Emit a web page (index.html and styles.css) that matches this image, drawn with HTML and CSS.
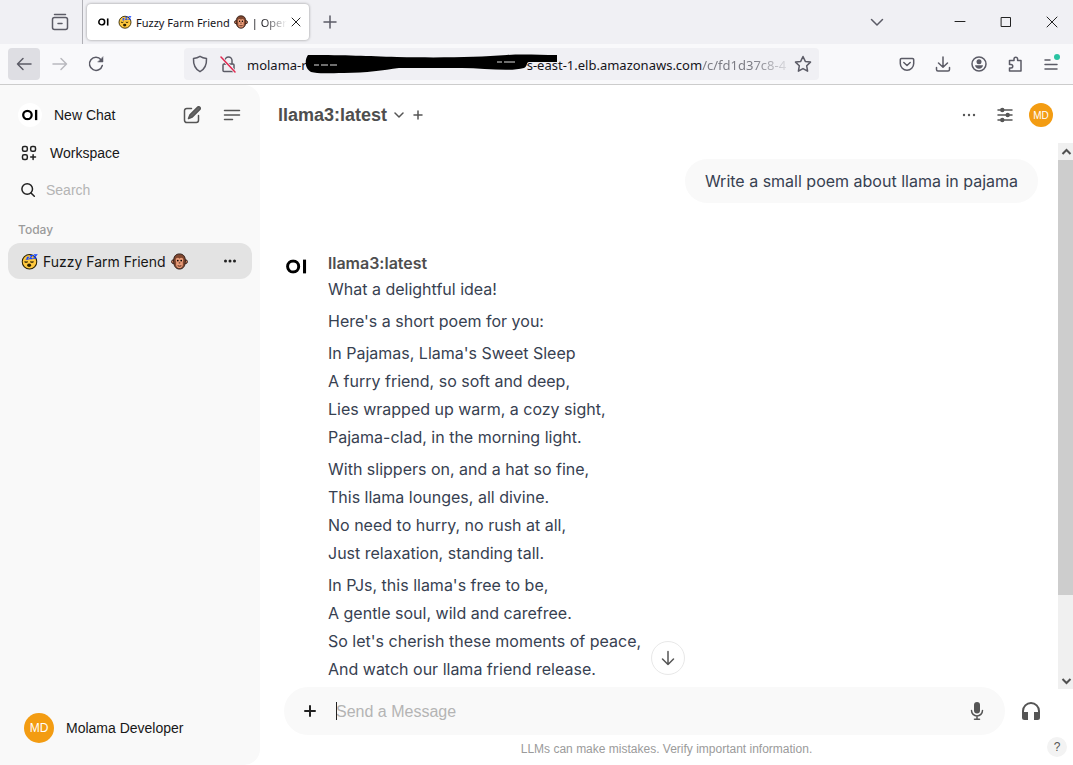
FILE: index.html
```html
<!DOCTYPE html>
<html lang="en">
<head>
<meta charset="utf-8">
<title>Fuzzy Farm Friend | Open WebUI</title>
<link rel="stylesheet" href="styles.css">
</head>
<body>
<svg class="defs" aria-hidden="true">
  <symbol id="logo" viewBox="0 0 20 14"><circle cx="6.8" cy="7" r="5.3" fill="none" stroke="#000" stroke-width="2.8"/><path d="M16.2 .4h2.9v13.2h-2.9z"/></symbol>
  <symbol id="sleepy" viewBox="0 0 18 18">
    <circle cx="9" cy="9.3" r="7.7" fill="#ffc83d" stroke="#2b2100" stroke-width="1.1"/>
    <path d="M3.8 9q1.600 1.500 3.200 0M10 9q1.600 1.500 3.200 0" fill="none" stroke="#2b2100" stroke-width="1.2"/>
    <ellipse cx="8.600" cy="13" rx="2.1" ry="1.8" fill="#2b2100"/>
    <path d="M13.500 2h3l-3 3.500h3.200M9.300 2.800h2.700L9.300 5.900h2.900M6 4.500h1.800L6 6.500h2" fill="none" stroke="#1746ff" stroke-width="1.200"/>
  </symbol>
  <symbol id="monkey" viewBox="0 0 18 18">
    <circle cx="2.6" cy="9.2" r="2" fill="#d98a68" stroke="#2a1711"/><circle cx="15.4" cy="9.2" r="2" fill="#d98a68" stroke="#2a1711"/>
    <path d="M9 1C4.600 1 2.800 4 2.800 8.500S4.500 17 9 17s6.200-4 6.200-8.500S13.400 1 9 1z" fill="#80472f" stroke="#2a1711"/>
    <path d="M9 6C7.800 4.300 4.900 5 5 7.600c0 1.300.8 1.800.5 3.200C5 13.800 6.500 16 9 16s4-2.200 3.500-5.200c-.3-1.400.5-1.900.5-3.200.1-2.600-2.800-3.300-4-1.600z" fill="#ea9c78"/>
    <circle cx="7.200" cy="8" r=".9"/><circle cx="10.800" cy="8" r=".9"/><path d="M8.200 10.500h1.600M7 13.500q2 .9 4 0" fill="none" stroke="#3a1b12"/>
  </symbol>
</svg>

<header class="browser">
  <div class="tabs">
    <div class="view-slot">
      <button class="icon-btn" aria-label="Recent browsing"><svg width="18" height="18" viewBox="0 0 18 18" class="line chrome-ink"><path d="M3.500 1.500h11" /><rect x="1.500" y="4.500" width="15" height="12" rx="2"/><path d="M7 10.500h4"/></svg></button>
    </div>
    <div class="tab">
      <svg class="tab-logo" viewBox="0 0 20 14"><use href="#logo"/></svg>
      <svg class="tab-emoji"><use href="#sleepy"/></svg>
      <span>Fuzzy Farm Friend</span>
      <svg class="tab-emoji"><use href="#monkey"/></svg>
      <span class="tab-tail">| Oper</span>
      <button class="icon-btn tab-close" aria-label="Close tab"><svg width="10" height="10" viewBox="0 0 10 10" class="line thin dark"><path d="M1 1l8 8M9 1L1 9"/></svg></button>
    </div>
    <button class="icon-btn new-tab" aria-label="New tab"><svg width="14" height="14" viewBox="0 0 14 14" class="line chrome-ink"><path d="M7 1v12M1 7h12"/></svg></button>
    <div class="window-controls">
      <button class="icon-btn wide" aria-label="List all tabs"><svg width="14" height="14" viewBox="0 0 14 14" class="line chrome-ink"><path d="M1.500 4.500L7 10l5.500-5.500"/></svg></button>
      <button class="icon-btn" aria-label="Minimize"><svg width="12" height="12" viewBox="0 0 12 12" class="line thin dark"><path d="M1 5.500h10"/></svg></button>
      <button class="icon-btn" aria-label="Maximize"><svg width="12" height="12" viewBox="0 0 12 12" class="line thin dark"><path d="M1.500 1.500h9v9h-9z" stroke-linejoin="miter"/></svg></button>
      <button class="icon-btn" aria-label="Close window"><svg width="12" height="12" viewBox="0 0 12 12" class="line thin dark"><path d="M1 1l10 10M11 1L1 11"/></svg></button>
    </div>
  </div>
  <div class="toolbar">
    <button class="icon-btn nav active" aria-label="Back"><svg width="16" height="16" viewBox="0 0 16 16" class="line chrome-ink"><path d="M15 8H1.500M7 2.500L1.500 8 7 13.500"/></svg></button>
    <button class="icon-btn nav faded" aria-label="Forward"><svg width="16" height="16" viewBox="0 0 16 16" class="line chrome-ink"><path d="M1 8h13.500M9 2.500l5.500 5.500L9 13.500"/></svg></button>
    <button class="icon-btn nav" aria-label="Reload"><svg width="16" height="16" viewBox="0 0 16 16" class="line chrome-ink"><path d="M14.300 9.500A6.500 6.500 0 1 1 13 3.700"/><path d="M15 1v5h-5z" fill="#5b5b66" stroke-width=".5"/></svg></button>
    <div class="urlbar">
      <svg width="18" height="18" viewBox="0 0 18 18" class="line chrome-ink"><path d="M9 1.300c2 1.300 4 1.900 6.500 2.200.3 6-1.500 10.500-6.500 13.200C4 14 2.200 9.500 2.500 3.500 5 3.200 7 2.600 9 1.300z"/></svg>
      <svg width="18" height="18" viewBox="0 0 18 18" class="line chrome-ink"><rect x="4" y="9" width="11" height="7.500" rx="1"/><path d="M6 9V5.500a3.500 3.500 0 0 1 7 0V9"/><path d="M2 2l14 15" stroke="#f0f0f4" stroke-width="3"/><path d="M2 2l14 15" stroke="#e22850"/></svg>
      <div class="url">
        <span>molama-r</span>
        <svg class="scribble" viewBox="0 0 220 20" aria-hidden="true"><path d="M1 0C40 0 60 1 90 2c50 1 80 0 110-2 15-1 33 0 50 0v7h-28c-3 0-1 4-5 6-15 4-40 0-62 0H92c-16 2-32 5-55 5-14 0-26 1-33-1-7-4-6-13-3-17z"/><path d="M7 10h5m2 0h7m2 0h7M190 7h5m2 0h11" stroke="#ddd" fill="none"/></svg>
        <span>s-east-1.elb.amazonaws.com</span><span class="path">/c/fd1d37c8-4</span>
      </div>
      <svg width="18" height="18" viewBox="0 0 18 18" class="line chrome-ink"><path d="M9 1.500l2.300 4.900 5.200.7-3.800 3.700.9 5.400L9 13.600l-4.600 2.600.9-5.400L1.500 7.100l5.200-.7z"/></svg>
    </div>
    <div class="tools">
      <button class="icon-btn" aria-label="Save to Pocket"><svg width="16" height="16" viewBox="0 0 16 16" class="line chrome-ink"><path d="M2.500 2.500h11a1.200 1.200 0 0 1 1.200 1.200V7.500a6.700 6.700 0 0 1-13.400 0V3.700a1.200 1.200 0 0 1 1.200-1.200z"/><path d="M4.800 6.500L8 9.500l3.200-3"/></svg></button>
      <button class="icon-btn" aria-label="Downloads"><svg width="16" height="16" viewBox="0 0 16 16" class="line chrome-ink"><path d="M8 1v10M3.500 7L8 11.300 12.500 7M1.500 11.500v2a1.500 1.500 0 0 0 1.500 1.500h10a1.500 1.500 0 0 0 1.500-1.500v-2"/></svg></button>
      <button class="icon-btn" aria-label="Account"><svg width="16" height="16" viewBox="0 0 16 16" class="line chrome-ink"><circle cx="8" cy="8" r="7"/><circle cx="8" cy="5.800" r="2.500" fill="#5b5b66" stroke="none"/><path d="M4 9.300h8c-.3 2.200-2 3.400-4 3.400s-3.700-1.200-4-3.400z" fill="#5b5b66" stroke="none"/></svg></button>
      <button class="icon-btn" aria-label="Extensions"><svg width="16" height="16" viewBox="0 0 16 16" class="line chrome-ink"><path d="M2.500 7V4.500H7V3a1.800 1.800 0 0 1 3.600 0v1.500h3.400v10.500H2.500v-3H4a1.700 1.700 0 0 0 0-3.500H2.500z"/></svg></button>
      <button class="icon-btn" aria-label="Menu, update available"><svg width="16" height="16" viewBox="0 0 16 16" class="line chrome-ink"><path d="M2 4h5M2 8.500h12M2 13h12"/></svg><i class="dot"></i></button>
    </div>
  </div>
</header>

<div class="app">
  <aside class="sidebar">
    <div class="side-head">
      <a class="new-chat" href="#"><span class="logo-disc"><svg width="16" height="12" viewBox="0 0 20 14"><use href="#logo"/></svg></span>New Chat</a>
      <button class="icon-btn" aria-label="New chat"><svg width="18" height="18" viewBox="0 0 18 18" class="line grey"><path d="M8.500 2.500H3.700A2.200 2.200 0 0 0 1.500 4.700v9.600a2.200 2.200 0 0 0 2.200 2.200h9.600a2.200 2.200 0 0 0 2.200-2.200V9.500"/><path d="M14.500 1.200a1.600 1.600 0 0 1 2.300 2.300L9.300 11l-3.800 1.500L7 8.700z" fill="#666"/></svg></button>
      <button class="icon-btn" aria-label="Toggle sidebar"><svg width="18" height="18" viewBox="0 0 18 18" class="line grey"><path d="M1.500 4.500h15M1.500 9h15M1.500 13.500h8"/></svg></button>
    </div>
    <a class="workspace" href="#"><svg width="16" height="16" viewBox="0 0 16 16" class="line dark"><rect x="1.500" y="1.500" width="4.800" height="4.800" rx="1.500"/><rect x="9.700" y="1.500" width="4.800" height="4.800" rx="1.500"/><rect x="1.500" y="9.700" width="4.800" height="4.800" rx="1.500"/><path d="M12.100 9.700v4.800M9.700 12.100h4.800"/></svg>Workspace</a>
    <label class="search"><svg width="16" height="16" viewBox="0 0 16 16" class="line dark"><circle cx="7.200" cy="7" r="5.300"/><path d="M11 11l3.300 3.300"/></svg><input type="text" placeholder="Search" aria-label="Search"></label>
    <div class="day">Today</div>
    <div class="chat-item">
      <a href="#"><svg class="emoji"><use href="#sleepy"/></svg>Fuzzy Farm Friend<svg class="emoji"><use href="#monkey"/></svg></a>
      <button class="icon-btn" aria-label="Chat menu"><svg width="14" height="4" viewBox="0 0 14 4" fill="#222"><circle cx="2.500" cy="2" r="1.500"/><circle cx="7" cy="2" r="1.500"/><circle cx="11.500" cy="2" r="1.500"/></svg></button>
    </div>
    <button class="user"><span class="avatar large">MD</span>Molama Developer</button>
  </aside>

  <main>
    <div class="top">
      <button class="model">llama3:latest <svg width="10" height="10" viewBox="0 0 10 10" class="line grey"><path d="M1 3l4 4 4-4"/></svg></button>
      <button class="icon-btn" aria-label="Add model"><svg width="10" height="10" viewBox="0 0 10 10" class="line grey"><path d="M5 1v8M1 5h8"/></svg></button>
      <div class="top-actions">
        <button class="icon-btn" aria-label="More"><svg width="14" height="4" viewBox="0 0 14 4" fill="#555"><circle cx="2" cy="2" r="1.200"/><circle cx="7" cy="2" r="1.200"/><circle cx="12" cy="2" r="1.200"/></svg></button>
        <button class="icon-btn" aria-label="Controls"><svg width="16" height="16" viewBox="0 0 16 16" class="line grey"><path d="M1 3h14M1 8h14M1 13h14"/><g fill="#555" stroke="none"><circle cx="5.300" cy="3" r="2.200"/><circle cx="10.700" cy="8" r="2.200"/><circle cx="5.300" cy="13" r="2.200"/></g></svg></button>
        <button class="avatar" aria-label="User menu">MD</button>
      </div>
    </div>

    <div class="messages">
      <div class="thread">
        <div class="bubble">Write a small poem about llama in pajama</div>
        <article class="reply">
          <svg class="reply-logo" viewBox="0 0 20 14"><use href="#logo"/></svg>
          <div>
            <h2>llama3:latest</h2>
            <p>What a delightful idea!</p>
            <p>Here's a short poem for you:</p>
            <p>In Pajamas, Llama's Sweet Sleep<br>A furry friend, so soft and deep,<br>Lies wrapped up warm, a cozy sight,<br>Pajama-clad, in the morning light.</p>
            <p>With slippers on, and a hat so fine,<br>This llama lounges, all divine.<br>No need to hurry, no rush at all,<br>Just relaxation, standing tall.</p>
            <p>In PJs, this llama's free to be,<br>A gentle soul, wild and carefree.<br>So let's cherish these moments of peace,<br>And watch our llama friend release.</p>
          </div>
        </article>
      </div>
      <div class="scrollbar" aria-hidden="true">
        <svg viewBox="0 0 15 17"><path d="M4.500 11L8.500 7l4 4"/></svg>
        <div class="track"><div class="thumb"></div></div>
        <svg viewBox="0 0 15 17"><path d="M4.500 7l4 4 4-4"/></svg>
      </div>
    </div>

    <footer>
      <button class="to-bottom" aria-label="Scroll to bottom"><svg width="16" height="16" viewBox="0 0 16 16" class="line grey"><path d="M8 1.500v13M2.500 9L8 14.500 13.500 9"/></svg></button>
      <form class="compose">
        <div class="field">
          <button type="button" class="icon-btn" aria-label="Attach"><svg width="14" height="14" viewBox="0 0 14 14" class="line dark heavy"><path d="M7 2v10M2 7h10"/></svg></button>
          <span class="entry"><i class="caret"></i><input type="text" placeholder="Send a Message" aria-label="Send a Message"></span>
          <button type="button" class="icon-btn" aria-label="Record voice"><svg width="20" height="20" viewBox="0 0 20 20" class="line grey"><rect x="7" y="1" width="6" height="11.500" rx="3" fill="#555" stroke="none"/><path d="M4.500 9.500a5.500 5.500 0 0 0 11 0M10 15v3M7.500 18.300h5"/></svg></button>
        </div>
        <button type="button" class="icon-btn" aria-label="Call"><svg width="20" height="20" viewBox="0 0 20 20" fill="#555"><path d="M10 1a9 9 0 0 0-9 9v6.500A2.500 2.500 0 0 0 3.500 19H7v-8H3v-1a7 7 0 0 1 14 0v1h-4v8h3.500a2.500 2.500 0 0 0 2.500-2.500V10a9 9 0 0 0-9-9z"/></svg></button>
      </form>
      <p class="note">LLMs can make mistakes. Verify important information.</p>
      <button class="help" aria-label="Help">?</button>
    </footer>
  </main>
</div>
</body>
</html>
```

FILE: styles.css
```css
* { box-sizing: border-box; }
body {
  margin: 0;
  height: 100vh;
  display: flex;
  flex-direction: column;
  overflow: hidden;
  background: #fff;
  font-family: "Liberation Sans", Arial, sans-serif;
  font-size: 14px;
  color: #171717;
}
button, input { font: inherit; color: inherit; border: 0; background: none; padding: 0; margin: 0; }
input { outline: 0; min-width: 0; }
a { color: inherit; text-decoration: none; }
svg { flex: none; display: block; }
.defs { position: absolute; width: 0; height: 0; }
.line { fill: none; stroke-width: 1.5; stroke-linecap: round; stroke-linejoin: round; }
.line.thin { stroke-width: 1; }
.line.heavy { stroke-width: 2; }
.chrome-ink { stroke: #5b5b66; }
.dark { stroke: #222; }
.grey { stroke: #555; }
.icon-btn { flex: none; display: flex; align-items: center; justify-content: center; position: relative; }

.browser { flex: none; font-family: "Noto Sans", sans-serif; border-bottom: 1px solid #ccc; }
.tabs { height: 44px; display: flex; align-items: center; background: #f0f0f4; }
.view-slot { flex: none; width: 83px; height: 44px; display: flex; align-items: center; justify-content: flex-end; padding-right: 13px; border-right: 1px solid #b0b0b6; }
.tab {
  flex: none; width: 222px; height: 36px; margin-left: 4px; padding: 0 12px 0 11px;
  display: flex; align-items: center; gap: 4px;
  background: #fff; border-radius: 4px; box-shadow: 0 0 3px #00000066;
  font-size: 11px; color: #15141a; white-space: nowrap;
}
.tab-logo { width: 11px; height: 8px; margin-right: 5px; }
.tab-emoji { width: 14px; height: 14px; }
.tab-tail { mask-image: linear-gradient(to right, #000 30%, transparent); }
.tab-close { margin-left: auto; }
.new-tab { width: 28px; margin-left: 7px; }
.window-controls { margin-left: auto; display: flex; padding-right: 15px; gap: 34px; }
.wide { margin-right: 36px; }
.toolbar { height: 40px; display: flex; align-items: center; gap: 4px; padding: 0 14px 0 8px; background: #f9f9fb; }
.nav { width: 32px; height: 32px; border-radius: 4px; }
.nav.active { background: #dedee3; }
.nav.faded { opacity: .4; }
.urlbar { flex: 1; min-width: 0; height: 32px; margin-left: 68px; padding: 0 7px; display: flex; align-items: center; gap: 10px; background: #f0f0f4; border-radius: 4px; }
.url { flex: 1; min-width: 0; display: flex; align-items: center; height: 32px; padding-top: 2px; font-size: 13px; white-space: nowrap; color: #15141a; }
.scribble { width: 220px; height: 20px; overflow: visible; position: relative; z-index: 1; }
.path { color: #7c7c84; mask-image: linear-gradient(to right, #000 60%, #0003); }
.tools { display: flex; gap: 20px; margin-left: 76px; }
.dot { position: absolute; right: -1px; top: -2px; width: 6px; height: 6px; border-radius: 50%; background: #2ac3a2; }

.app { flex: 1; min-height: 0; display: flex; }
.sidebar { flex: none; width: 260px; padding: 12px 8px 16px; display: flex; flex-direction: column; background: #f9f9f9; border-radius: 0 16px 16px 0; }
.side-head { height: 36px; display: flex; align-items: center; gap: 22px; padding: 0 11px 0 10px; }
.new-chat { flex: 1; display: flex; align-items: center; gap: 12px; }
.logo-disc { width: 24px; height: 24px; border-radius: 50%; display: flex; align-items: center; justify-content: center; background: #fff; }
.workspace { height: 40px; display: flex; align-items: center; gap: 13px; padding-left: 13px; }
.search { height: 34px; display: flex; align-items: center; gap: 10px; padding-left: 12px; }
.search input { flex: 1; }
input::placeholder { color: #b4b4b4; opacity: 1; }
.day { padding: 14px 10px 4px; line-height: 18px; font-size: 12px; color: #9b9b9b; font-family: Inter, sans-serif; font-weight: 500; }
.chat-item { height: 36px; display: flex; align-items: center; justify-content: space-between; padding: 0 15px 0 13px; border-radius: 12px; background: #e3e3e3; }
.chat-item a { display: flex; align-items: center; gap: 5px; font-family: Inter, sans-serif; }
.emoji { width: 17px; height: 17px; }
.user { margin-top: auto; display: flex; align-items: center; gap: 12px; height: 42px; padding-left: 16px; }
.avatar { width: 24px; height: 24px; border-radius: 50%; display: flex; align-items: center; justify-content: center; background: #f39c12; color: #fff; font-size: 10px; }
.avatar.large { width: 30px; height: 30px; font-size: 12px; }

main { flex: 1; min-width: 0; display: flex; flex-direction: column; }
.top { flex: none; height: 58px; display: flex; align-items: center; gap: 9px; padding: 2px 20px 0 18px; }
.model { display: flex; align-items: center; gap: 7px; font-size: 18px; font-weight: 700; color: #4e4e4e; }
.top-actions { margin-left: auto; display: flex; align-items: center; gap: 12px; }
.top-actions .icon-btn { width: 24px; height: 24px; }
.messages { flex: 1; min-height: 0; display: flex; }
.thread { flex: 1; min-width: 0; overflow: hidden; padding: 16px 20px 0 26px; display: flex; flex-direction: column; gap: 48px; font-family: Inter, sans-serif; font-size: 16px; line-height: 28px; color: #374151; }
.bubble { align-self: flex-end; padding: 8px 20px; border-radius: 22px; background: #f9f9f9; }
.reply { display: flex; gap: 21px; }
.reply-logo { width: 21px; height: 15px; margin-top: 8px; }
.reply h2 { margin: 0; font-size: 16px; line-height: 24px; font-weight: 600; color: #4e4e4e; }
.reply p { margin: 0 0 4px; }
.scrollbar { flex: none; width: 15px; display: flex; flex-direction: column; background: #f0f0f0; }
.scrollbar svg { width: 15px; height: 17px; fill: none; stroke: #505050; stroke-width: 2; }
.track { flex: 1; }
.thumb { height: 85%; background: #cdcdcd; }

footer { flex: none; height: 78px; margin-top: -2px; position: relative; }
.to-bottom { position: absolute; left: calc(50% - 16px); top: -46px; width: 34px; height: 34px; border: 1px solid #e8e8e8; border-radius: 50%; background: #fff; display: flex; align-items: center; justify-content: center; }
.compose { display: flex; align-items: center; gap: 16px; padding: 0 32px 0 24px; }
.field { flex: 1; min-width: 0; height: 48px; display: flex; align-items: center; gap: 19px; padding: 0 18px 0 19px; border-radius: 24px; background: #f9f9f9; }
.entry { flex: 1; position: relative; display: flex; padding-top: 1px; font-size: 16px; }
.entry input { flex: 1; }
.caret { position: absolute; left: 0; top: 0; width: 1px; height: 18px; background: #222; }
.note { margin: 6px 0 0; text-align: center; font-size: 12px; line-height: 16px; color: #9b9b9b; }
.help { position: absolute; right: 6px; bottom: 8px; width: 20px; height: 20px; border-radius: 50%; background: #f3f3f3; color: #555; font-size: 12px; }
```
